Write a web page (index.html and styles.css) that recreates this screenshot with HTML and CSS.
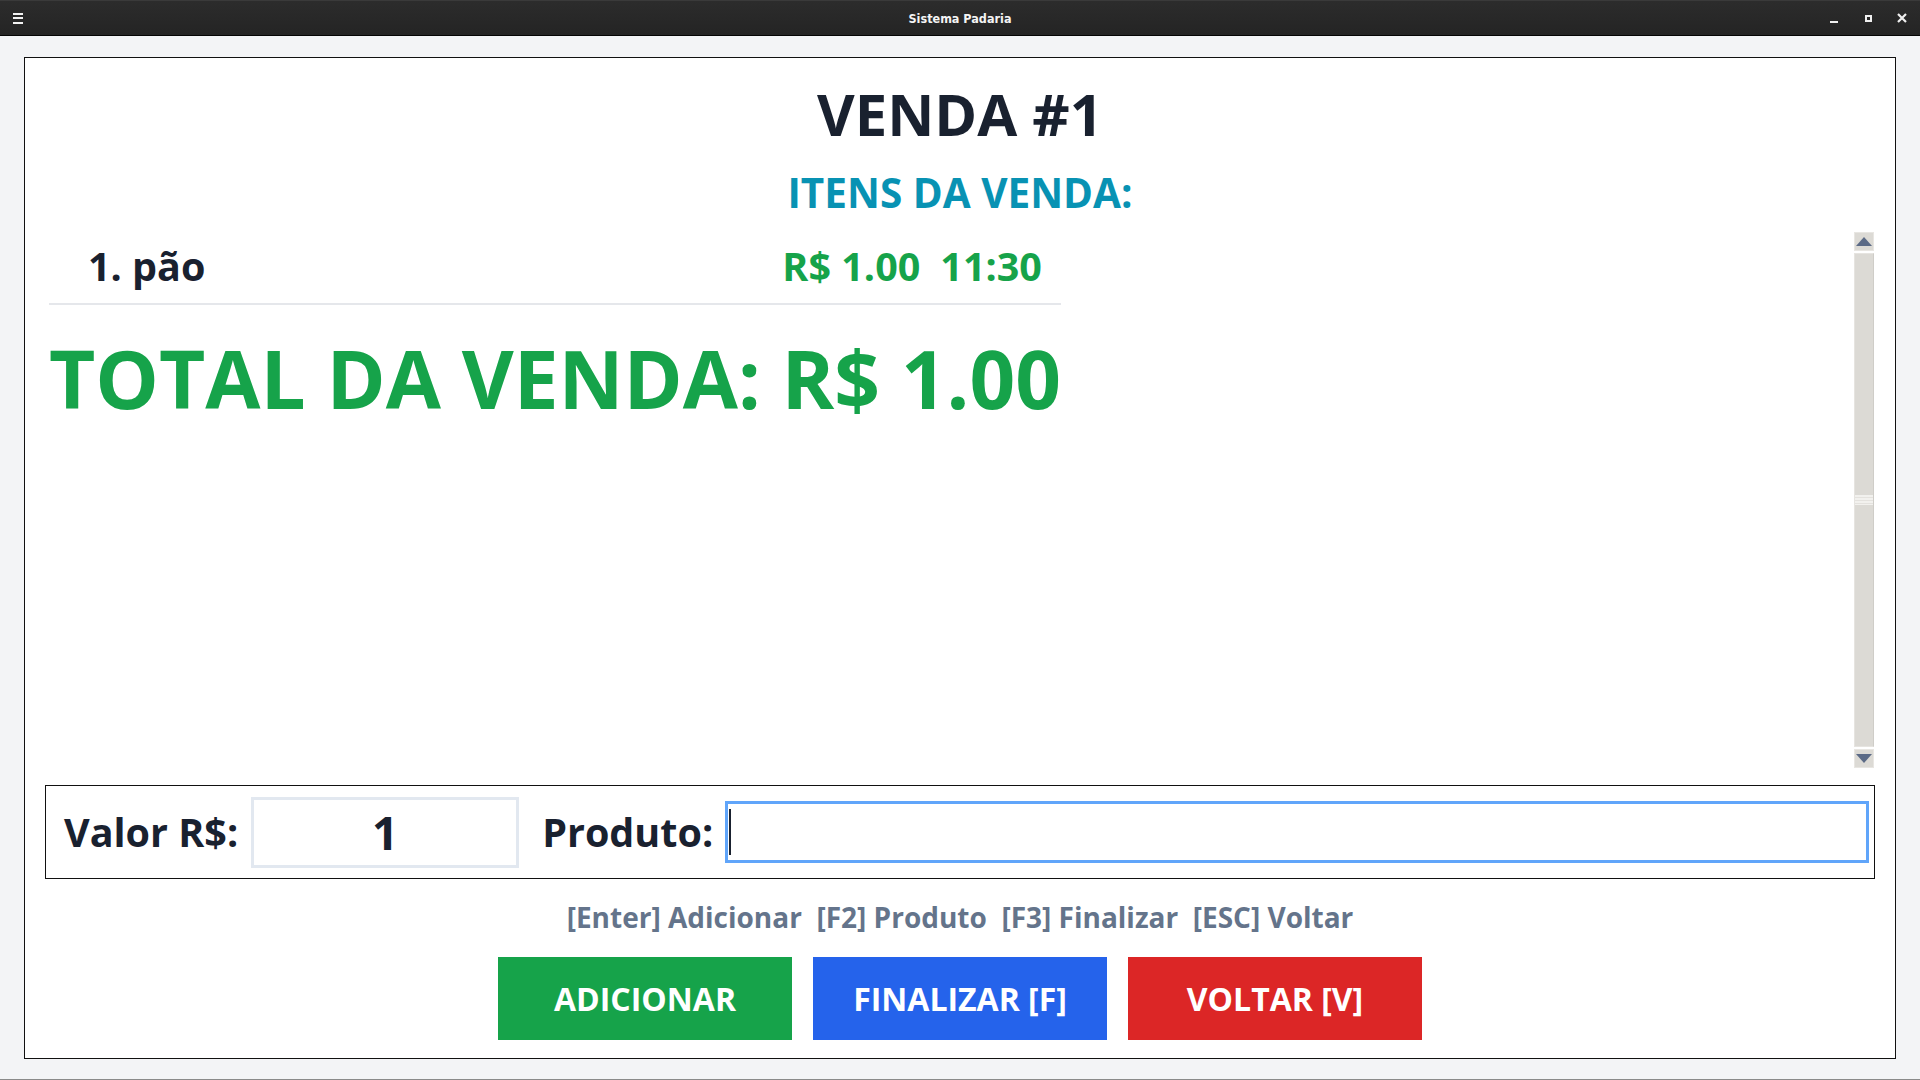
FILE: index.html
```html
<!DOCTYPE html>
<html lang="pt-BR">
<head>
  <meta charset="UTF-8">
  <title>Sistema Padaria</title>
  <link rel="stylesheet" href="styles.css">
</head>
<body>
  <div class="titlebar">
    <div class="tb-left">
      <span class="menu-icon"><i></i><i></i><i></i></span>
    </div>
    <span class="tb-title">Sistema Padaria</span>
    <div class="tb-controls">
      <span class="ctl"><span class="ctl-min"></span></span>
      <span class="ctl"><span class="ctl-max"></span></span>
      <span class="ctl">
        <svg width="10" height="10" viewBox="0 0 10 10">
          <path d="M1 1 L9 9 M9 1 L1 9" stroke="#f0f0f0" stroke-width="2.2" fill="none"/>
        </svg>
      </span>
    </div>
  </div>

  <div class="desktop">
    <main class="frame">
      <h1 class="sale-title">VENDA #1</h1>
      <h2 class="sale-subtitle">ITENS DA VENDA:</h2>

      <div class="scroll-area">
        <div class="canvas">
          <div class="sale">
            <div class="item">
              <span class="item-name">1. pão</span>
              <span class="item-info"><span>R$ 1.00</span><span>11:30</span></span>
            </div>
            <div class="total">TOTAL DA VENDA: R$ 1.00</div>
          </div>
        </div>
        <div class="scrollbar">
          <div class="sb-btn">
            <svg width="16" height="9" viewBox="0 0 16 9"><path d="M0 9 L8 0 L16 9 Z" fill="#5b6a86"/></svg>
          </div>
          <div class="sb-thumb"><span class="grip"></span></div>
          <div class="sb-btn">
            <svg width="16" height="9" viewBox="0 0 16 9"><path d="M0 0 L16 0 L8 9 Z" fill="#5b6a86"/></svg>
          </div>
        </div>
      </div>

      <div class="entry-box">
        <label class="entry-label" for="valor">Valor R$:</label>
        <input id="valor" class="field field-valor" type="text" value="1">
        <label class="entry-label label-produto" for="produto">Produto:</label>
        <div class="produto-wrap">
          <input id="produto" class="field field-produto" type="text">
          <span class="caret"></span>
        </div>
      </div>

      <p class="hint">[Enter] Adicionar&nbsp; [F2] Produto&nbsp; [F3] Finalizar&nbsp; [ESC] Voltar</p>

      <div class="actions">
        <button class="btn btn-add">ADICIONAR</button>
        <button class="btn btn-finish">FINALIZAR [F]</button>
        <button class="btn btn-back">VOLTAR [V]</button>
      </div>
    </main>
  </div>
</body>
</html>
```

FILE: styles.css
```css
* {
  box-sizing: border-box;
}

body {
  margin: 0;
  width: 1920px;
  height: 1080px;
  overflow: hidden;
  display: flex;
  flex-direction: column;
  background: #f3f4f6;
  font-family: "Open Sans", "Noto Sans", sans-serif;
  color: #19212f;
}

/* window title bar */
.titlebar {
  height: 36px;
  flex: none;
  display: grid;
  grid-template-columns: 1fr auto 1fr;
  align-items: center;
  background: linear-gradient(#2c2c2c, #242424);
  border-top: 1px solid #3a3a3a;
  border-bottom: 1px solid #050505;
}

.tb-left {
  padding-left: 13px;
  display: flex;
}

.menu-icon {
  display: flex;
  flex-direction: column;
  gap: 2.5px;
  width: 10px;
}

.menu-icon i {
  display: block;
  height: 2px;
  background: #f2f2f2;
}

.tb-title {
  font-family: "DejaVu Sans Condensed", "DejaVu Sans", sans-serif;
  font-weight: bold;
  font-size: 12.5px;
  color: #f4f4f4;
}

.tb-controls {
  justify-self: end;
  display: flex;
  padding-right: 1px;
}

.ctl {
  width: 34px;
  height: 34px;
  display: flex;
  align-items: center;
  justify-content: center;
}

.ctl-min {
  width: 8px;
  height: 2px;
  margin-top: 7px;
  background: #f0f0f0;
}

.ctl-max {
  width: 7px;
  height: 7px;
  margin-top: 1px;
  border: 2.5px solid #f0f0f0;
}

/* main area */
.desktop {
  flex: 1;
  padding: 21px 24px 20px 24px;
  border-bottom: 1px solid #8a8a8a;
  display: flex;
}

.frame {
  flex: 1;
  background: #fff;
  border: 1px solid #111;
  padding: 20px 20px 0 20px;
  display: flex;
  flex-direction: column;
}

.sale-title {
  margin: 0;
  text-align: center;
  font-size: 58px;
  line-height: 72px;
  font-weight: 700;
  color: #19212f;
}

.sale-subtitle {
  margin: 18px 0 0;
  text-align: center;
  font-size: 40.5px;
  line-height: 50px;
  font-weight: 700;
  color: #0892b3;
}

.scroll-area {
  margin-top: 14px;
  height: 536px;
  display: flex;
}

.canvas {
  flex: 1;
  padding-left: 4px;
}

.sale {
  width: fit-content;
}

.item {
  display: flex;
  justify-content: space-between;
  padding: 11px 19px 14px 39px;
  border-bottom: 2px solid #e5e7eb;
  font-size: 39.5px;
  line-height: 46px;
  font-weight: 700;
}

.item-info {
  display: flex;
  gap: 20px;
  color: #16a34a;
}

.total {
  margin-top: 25px;
  font-size: 80px;
  line-height: 96px;
  font-weight: 700;
  color: #16a34a;
  white-space: nowrap;
}

/* scrollbar (clam look) */
.scrollbar {
  width: 20px;
  margin-right: 1px;
  display: flex;
  flex-direction: column;
  gap: 2px;
}

.sb-btn {
  height: 19px;
  display: flex;
  align-items: center;
  justify-content: center;
  background: #dcdad5;
  border: 1px solid #e8e6e2;
}

.sb-thumb {
  flex: 1;
  display: flex;
  align-items: center;
  background: #dcdad5;
  border: 1px solid #e6e4e0;
  border-right-color: #cfcdc8;
}

.grip {
  display: block;
  width: 100%;
  height: 10px;
  background: repeating-linear-gradient(#f2f1ee 0 2px, #e4e2de 2px 3px);
}

/* entry row */
.entry-box {
  margin-top: 17px;
  height: 94px;
  border: 1px solid #111;
  display: flex;
  align-items: center;
  padding: 0 5px 0 18px;
}

.entry-label {
  font-size: 39.5px;
  font-weight: 700;
  color: #19212f;
  white-space: nowrap;
}

.label-produto {
  margin-left: 23px;
}

.field {
  font-family: inherit;
  font-weight: 700;
  color: #19212f;
  outline: none;
  background: #fff;
}

.field-valor {
  width: 268px;
  height: 71px;
  margin-left: 13px;
  border: 3px solid #e2e8f0;
  text-align: center;
  font-size: 46px;
  padding: 0;
}

.produto-wrap {
  flex: 1;
  margin-left: 12px;
  position: relative;
}

.field-produto {
  width: 100%;
  height: 62px;
  border: 3px solid #60a5fa;
  font-size: 40px;
  padding: 0 6px;
  display: block;
}

.caret {
  position: absolute;
  left: 4px;
  top: 8px;
  width: 2px;
  height: 46px;
  background: #19212f;
}

.hint {
  margin: 21px 0 0;
  text-align: center;
  font-size: 28px;
  line-height: 34px;
  font-weight: 700;
  color: #64748b;
}

.actions {
  margin-top: 23px;
  display: flex;
  justify-content: center;
  gap: 21px;
}

.btn {
  width: 294px;
  height: 83px;
  border: none;
  color: #fff;
  font-family: inherit;
  font-size: 32px;
  font-weight: 700;
  cursor: pointer;
}

.btn-add {
  background: #16a34a;
}

.btn-finish {
  background: #2563eb;
}

.btn-back {
  background: #dc2626;
}
```
